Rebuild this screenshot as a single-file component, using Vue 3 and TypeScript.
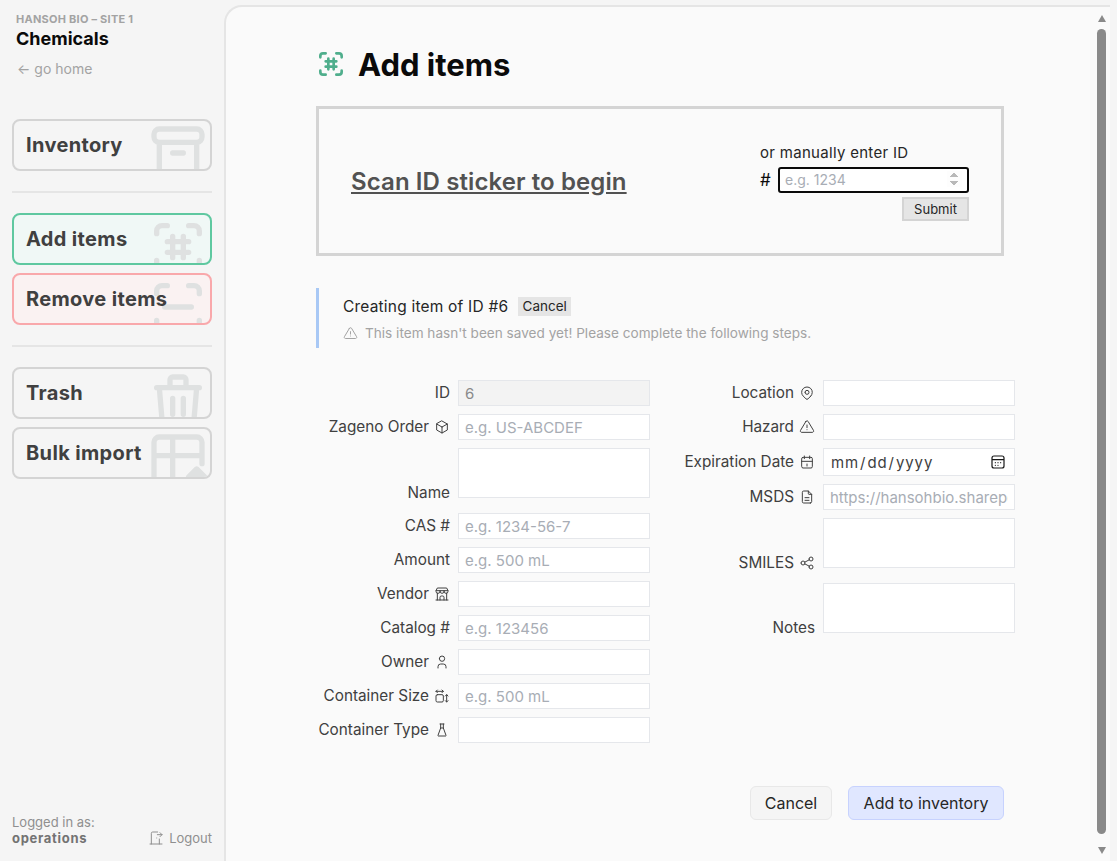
<script setup lang="ts">
interface Field {
  label: string
  icon?: string
  placeholder?: string
  kind?: 'text' | 'area' | 'date'
  value?: string
  disabled?: boolean
}
const scan = 'M4 7V6a2 2 0 0 1 2-2h2M4 17v1a2 2 0 0 0 2 2h2M16 4h2a2 2 0 0 1 2 2v1M16 20h2a2 2 0 0 0 2-2v-1'
const hash = 'M8 10h8M8 14h8M10 8v8M14 8v8'
const alert = 'M12 9v4M10.363 3.591l-8.106 13.534a1.914 1.914 0 0 0 1.636 2.871h16.214a1.914 1.914 0 0 0 1.636-2.87l-8.106-13.536a1.914 1.914 0 0 0-3.274 0zM12 16h.01'
const nav1 = { label: 'Inventory', cls: '', d: 'M5 3h14a2 2 0 0 1 2 2v1a2 2 0 0 1-2 2H5a2 2 0 0 1-2-2V5a2 2 0 0 1 2-2zM5 8v10a2 2 0 0 0 2 2h10a2 2 0 0 0 2-2V8M10 12h4' }
const nav2 = [
  { label: 'Add items', cls: 'add', d: scan + hash },
  { label: 'Remove items', cls: 'remove', d: scan + 'M7 12h10' },
]
const nav3 = [
  { label: 'Trash', cls: '', d: 'M4 7h16M10 11v6M14 11v6M5 7l1 12a2 2 0 0 0 2 2h8a2 2 0 0 0 2-2l1-12M9 7V4a1 1 0 0 1 1-1h4a1 1 0 0 1 1 1v3' },
  { label: 'Bulk import', cls: '', d: 'M3 21V5a2 2 0 0 1 2-2h14a2 2 0 0 1 2 2v8M3 10h18M10 3v18M16 18l3-3 3 3M18 18h2M19 16.5v2' },
]
const left: Field[] = [
  { label: 'ID', value: '6', disabled: true },
  { label: 'Zageno Order', placeholder: 'e.g. US-ABCDEF', icon: 'M12 3l8 4.5v9L12 21l-8-4.5v-9zM12 12l8-4.5M12 12v9M12 12L4 7.5' },
  { label: 'Name', kind: 'area' },
  { label: 'CAS #', placeholder: 'e.g. 1234-56-7' },
  { label: 'Amount', placeholder: 'e.g. 500 mL' },
  { label: 'Vendor', icon: 'M3 21h18M3 7v1a3 3 0 0 0 6 0V7m0 1a3 3 0 0 0 6 0V7m0 1a3 3 0 0 0 6 0V7H3l2-4h14l2 4M5 21V10.85M19 21V10.85M9 21v-4a2 2 0 0 1 2-2h2a2 2 0 0 1 2 2v4' },
  { label: 'Catalog #', placeholder: 'e.g. 123456' },
  { label: 'Owner', icon: 'M8 7a4 4 0 1 0 8 0a4 4 0 0 0-8 0M6 21v-2a4 4 0 0 1 4-4h4a4 4 0 0 1 4 4v2' },
  { label: 'Container Size', placeholder: 'e.g. 500 mL', icon: 'M3 5h11M12 7l2-2-2-2M5 3L3 5l2 2M19 10v11M17 19l2 2 2-2M21 12l-2-2-2 2M5 10h7a2 2 0 0 1 2 2v7a2 2 0 0 1-2 2H5a2 2 0 0 1-2-2v-7a2 2 0 0 1 2-2z' },
  { label: 'Container Type', icon: 'M9 3h6M10 9h4M10 3v6l-4 11a.7.7 0 0 0 .5 1h11a.7.7 0 0 0 .5-1l-4-11V3' },
]
const right: Field[] = [
  { label: 'Location', icon: 'M9 11a3 3 0 1 0 6 0a3 3 0 0 0-6 0M17.657 16.657l-4.243 4.243a2 2 0 0 1-2.827 0l-4.244-4.243a8 8 0 1 1 11.314 0z' },
  { label: 'Hazard', icon: alert },
  { label: 'Expiration Date', kind: 'date', icon: 'M4 7a2 2 0 0 1 2-2h12a2 2 0 0 1 2 2v12a2 2 0 0 1-2 2H6a2 2 0 0 1-2-2zM16 3v4M8 3v4M4 11h16M12 15v3' },
  { label: 'MSDS', placeholder: 'https://hansohbio.sharepoint.com', icon: 'M14 3v4a1 1 0 0 0 1 1h4M17 21H7a2 2 0 0 1-2-2V5a2 2 0 0 1 2-2h7l5 5v11a2 2 0 0 1-2 2zM9 13h6M9 17h6' },
  { label: 'SMILES', kind: 'area', icon: 'M3 12a3 3 0 1 0 6 0a3 3 0 0 0-6 0M15 6a3 3 0 1 0 6 0a3 3 0 0 0-6 0M15 18a3 3 0 1 0 6 0a3 3 0 0 0-6 0M8.7 10.7l6.6-3.4M8.7 13.3l6.6 3.4' },
  { label: 'Notes', kind: 'area' },
]
const columns = [left, right]
</script>

<template>
  <div class="app">
    <aside class="sidebar">
      <div class="org">HANSOH BIO – SITE 1</div>
      <div class="section">Chemicals</div>
      <a class="home">← go home</a>

      <button class="nav first">
        <span>{{ nav1.label }}</span>
        <svg class="nav-icon" viewBox="0 0 24 24"><path :d="nav1.d" /></svg>
      </button>
      <div class="divider"></div>
      <div class="nav-group">
        <button v-for="n in nav2" :key="n.label" class="nav" :class="n.cls">
          <span>{{ n.label }}</span>
          <svg class="nav-icon" viewBox="0 0 24 24"><path :d="n.d" /></svg>
        </button>
      </div>
      <div class="divider"></div>
      <div class="nav-group">
        <button v-for="n in nav3" :key="n.label" class="nav">
          <span>{{ n.label }}</span>
          <svg class="nav-icon" viewBox="0 0 24 24"><path :d="n.d" /></svg>
        </button>
      </div>

      <div class="foot">
        <div>
          <div>Logged in as:</div>
          <strong>operations</strong>
        </div>
        <a class="logout">
          <svg class="ico" viewBox="0 0 24 24"><path d="M13 12v.01M3 21h18M5 21V5a2 2 0 0 1 2-2h7.5m2.5 10.5V21M14 7h7m-3-3l3 3-3 3" /></svg>
          Logout
        </a>
      </div>
    </aside>

    <main class="panel">
      <div class="content">
        <h1 class="title">
          <svg class="title-icon" viewBox="0 0 24 24"><path :d="scan + hash" /></svg>
          Add items
        </h1>

        <section class="scanbox">
          <a class="scan-link">Scan ID sticker to begin</a>
          <div class="manual">
            <div class="manual-label">or manually enter ID</div>
            <div class="manual-row">
              <span class="pound">#</span>
              <input class="manual-input" type="number" placeholder="e.g. 1234" />
            </div>
            <button class="submit">Submit</button>
          </div>
        </section>

        <section class="notice">
          <div class="notice-top">
            <span>Creating item of ID #6</span>
            <button class="mini">Cancel</button>
          </div>
          <div class="notice-warn">
            <svg class="warn" viewBox="0 0 24 24"><path :d="alert" /></svg>
            This item hasn't been saved yet! Please complete the following steps.
          </div>
        </section>

        <form class="form" @submit.prevent>
          <div v-for="(col, i) in columns" :key="i" class="col">
            <label v-for="f in col" :key="f.label" class="row" :class="{ tall: f.kind === 'area' }">
              <span class="lbl">
                {{ f.label }}
                <svg v-if="f.icon" class="ico" viewBox="0 0 24 24"><path :d="f.icon" /></svg>
              </span>
              <textarea v-if="f.kind === 'area'" class="field area"></textarea>
              <span v-else-if="f.kind === 'date'" class="date-wrap">
                <input class="field datefield" type="date" />
                <svg class="cal" viewBox="0 0 24 24"><path d="M6 3h12a3 3 0 0 1 3 3v12a3 3 0 0 1-3 3H6a3 3 0 0 1-3-3V6a3 3 0 0 1 3-3zM3 8.5h18M8 13h.01M12 13h.01M16 13h.01M8 17h.01M12 17h.01" /></svg>
              </span>
              <input v-else class="field" type="text" :placeholder="f.placeholder" :value="f.value" :disabled="f.disabled" />
            </label>
          </div>
        </form>

        <div class="actions">
          <button class="btn">Cancel</button>
          <button class="btn primary">Add to inventory</button>
        </div>
      </div>

      <div class="scrollbar">
        <span class="arrow up"></span>
        <span class="thumb"></span>
        <span class="arrow down"></span>
      </div>
    </main>
  </div>
</template>

<style>
html, body { margin: 0; height: 100%; overflow: hidden; background: #f5f5f5; }
</style>

<style scoped>
* { box-sizing: border-box; }
.app {
  display: flex;
  height: 100vh;
  font-family: Inter, "Liberation Sans", sans-serif;
  color: #171717;
  background: #f5f5f5;
}
.sidebar {
  width: 224px;
  flex: none;
  padding: 13px 12px 15px 12px;
  display: flex;
  flex-direction: column;
}
.org { font-size: 11px; letter-spacing: .25px; font-weight: 700; color: #a3a3a3; margin-left: 4px; line-height: 13px; }
.section { font-size: 18px; font-weight: 700; color: #0a0a0a; margin: 1px 0 0 4px; line-height: 24px; }
.home { font-size: 14px; color: #a3a3a3; margin: 10px 0 0 5px; line-height: 16px; }
.nav {
  position: relative;
  display: flex;
  align-items: center;
  width: 200px;
  height: 52px;
  padding: 0 12px;
  border: 2px solid #d4d4d4;
  border-radius: 8px;
  background: #f5f5f5;
  overflow: hidden;
  font: inherit;
  font-size: 20px;
  letter-spacing: .35px;
  font-weight: 700;
  color: #404040;
}
.nav span { position: relative; z-index: 1; }
.nav.first { margin-top: 42px; }
.nav.add { background: #f0f8f6; border-color: #5fc8a0; }
.nav.remove { background: #faf2f2; border-color: #f9a8ab; }
.nav-icon {
  position: absolute;
  right: 0;
  top: 0;
  width: 64px;
  height: 64px;
  fill: none;
  stroke: #dfe1e1;
  stroke-width: 2;
  stroke-linecap: round;
  stroke-linejoin: round;
}
.nav-group { display: flex; flex-direction: column; gap: 8px; }
.divider { height: 2px; width: 200px; background: #e5e5e5; margin: 20px 0; }
.foot {
  margin-top: auto;
  display: flex;
  justify-content: space-between;
  align-items: flex-end;
  font-size: 13px;
  line-height: 16px;
  color: #8f8f8f;
}
.foot strong { color: #737373; letter-spacing: .7px; }
.logout { display: flex; align-items: center; gap: 5px; }
.ico {
  width: 16px;
  height: 16px;
  fill: none;
  stroke: currentColor;
  stroke-width: 1.5;
  stroke-linecap: round;
  stroke-linejoin: round;
  flex: none;
}
.panel {
  flex: none;
  width: 886px;
  margin-top: 5px;
  display: flex;
  justify-content: space-between;
  background: #fafafa;
  border-left: 2px solid #e5e5e5;
  border-top: 2px solid #e5e5e5;
  border-top-left-radius: 18px;
  overflow: hidden;
}
.content { width: 800px; padding: 0 0 0 90px; }
.title {
  display: flex;
  align-items: center;
  gap: 11px;
  margin: 37px 0 0 -1px;
  height: 40px;
  font-size: 31px;
  font-weight: 700;
  color: #0a0a0a;
}
.title-icon {
  width: 32px;
  height: 32px;
  fill: none;
  stroke: #4fae8c;
  stroke-width: 2;
  stroke-linecap: round;
  stroke-linejoin: round;
}
.scanbox {
  width: 688px;
  height: 150px;
  margin-top: 22px;
  border: 3px solid #d4d4d4;
  display: flex;
  align-items: center;
  justify-content: space-between;
  padding: 0 32px;
}
.scan-link { font-size: 24px; letter-spacing: .1px; font-weight: 600; color: #525252; text-decoration: underline; }
.manual { width: 209px; display: flex; flex-direction: column; align-items: flex-end; }
.manual-label { align-self: flex-start; font-size: 15px; letter-spacing: .3px; line-height: 20px; color: #262626; margin-top: 1px; }
.manual-row { display: flex; align-items: center; justify-content: space-between; margin-top: 4px; width: 100%; }
.pound { font-size: 17px; color: #0a0a0a; }
.manual-input {
  width: 191px;
  height: 26px;
  border: 2px solid #0a0a0a;
  border-radius: 3px;
  background: #fff;
  padding: 0 5px;
  font: inherit;
  font-size: 14px;
  outline: none;
}
.manual-input::-webkit-inner-spin-button { opacity: .6; }
.manual-input::placeholder, .field::placeholder { color: #a8adb5; }
.submit {
  width: 67px;
  height: 24px;
  margin-top: 4px;
  border: 2px solid #d4d4d4;
  background: #e5e5e5;
  font: inherit;
  font-size: 13px;
  color: #262626;
  padding: 0;
}
.notice {
  height: 60px;
  margin-top: 32px;
  border-left: 3px solid #a8c8f5;
  padding-left: 24px;
}
.notice-top { display: flex; align-items: center; gap: 10px; padding-top: 9px; font-size: 15.5px; letter-spacing: .2px; line-height: 19px; color: #262626; }
.mini { height: 19px; width: 53px; padding: 0; border: 0; background: #e5e5e5; font: inherit; font-size: 13.5px; letter-spacing: 0; color: #262626; }
.notice-warn { display: flex; align-items: center; gap: 7px; margin-top: 9px; font-size: 13.6px; line-height: 16px; color: #a3a3a3; }
.warn { width: 15px; height: 15px; fill: none; stroke: currentColor; stroke-width: 1.6; stroke-linecap: round; stroke-linejoin: round; }
.form { display: flex; gap: 31px; width: 699px; margin-top: 32px; }
.col { width: 334px; display: flex; flex-direction: column; gap: 8px; }
.row { display: flex; align-items: center; gap: 8px; }
.row.tall { align-items: flex-end; margin-bottom: 7px; }
.lbl {
  width: 134px;
  flex: none;
  display: flex;
  align-items: center;
  justify-content: flex-end;
  gap: 5px;
  font-size: 15.3px;
  line-height: 20px;
  color: #404040;
  white-space: nowrap;
}
.row.tall .lbl { margin-bottom: -5px; }
.field {
  width: 192px;
  height: 26px;
  border: 1px solid #e5e7eb;
  background: #fff;
  padding: 0 6px;
  font: inherit;
  font-size: 15px;
  color: #262626;
  outline: none;
  border-radius: 0;
}
.field:disabled { background: #f3f3f3; color: #8a8a8a; }
.area { height: 50px; resize: none; display: block; }
.date-wrap { position: relative; display: block; width: 192px; height: 28px; }
.datefield { height: 28px; letter-spacing: .9px; color: #404040; display: block; }
.datefield::-webkit-calendar-picker-indicator { opacity: 0; }
.cal {
  position: absolute;
  right: 9px;
  top: 6px;
  width: 16px;
  height: 16px;
  fill: none;
  stroke: #171717;
  stroke-width: 1.8;
  stroke-linecap: round;
  stroke-linejoin: round;
  pointer-events: none;
}
.actions { display: flex; justify-content: flex-end; gap: 16px; width: 688px; margin-top: 43px; }
.btn {
  height: 34px;
  width: 82px;
  border: 1px solid #e8e8e8;
  border-radius: 6px;
  background: #f5f5f5;
  font: inherit;
  font-size: 16px;
  color: #262626;
  padding: 0 0 1px;
}
.btn.primary { width: 156px; background: #e0e7ff; border-color: #c7d2fe; }
.scrollbar {
  width: 13px;
  margin-right: 2px;
  display: flex;
  flex-direction: column;
  align-items: center;
  padding: 8px 0 7px;
}
.arrow { width: 0; height: 0; border-left: 4.5px solid transparent; border-right: 4.5px solid transparent; flex: none; }
.arrow.up { border-bottom: 7px solid #8a8a8a; }
.arrow.down { border-top: 7px solid #8a8a8a; }
.thumb { flex: 1; width: 9px; margin: 7px 0 13px; background: #8a8a8a; border-radius: 5px; }
</style>
